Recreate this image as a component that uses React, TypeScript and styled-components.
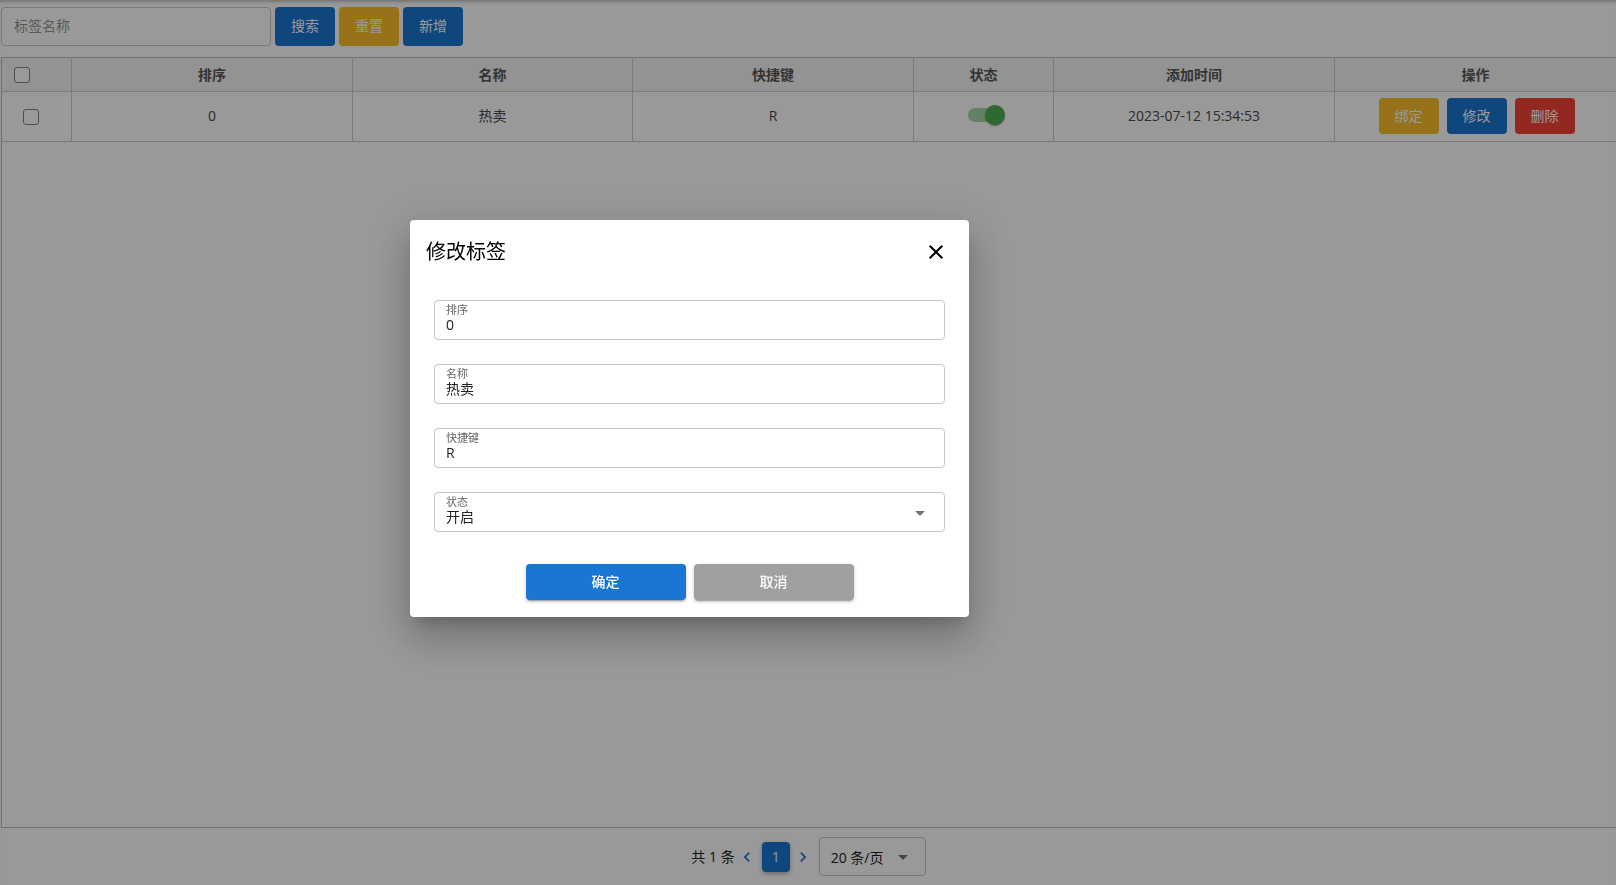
import styled, { createGlobalStyle } from 'styled-components';

const GlobalStyle = createGlobalStyle`
    html, body {
        margin: 0;
        padding: 0;
        background: #ffffff;
        font-family: "Open Sans", "Noto Sans CJK SC", sans-serif;
        font-size: 14px;
        color: #222;
    }
`;

const tones: Record<string, string> = {
    blue: '#1976d2',
    gold: '#fbc02d',
    red: '#f44336',
    gray: '#a0a0a0',
};

const columns = [
    { title: '排序', width: 281 },
    { title: '名称', width: 280 },
    { title: '快捷键', width: 281 },
    { title: '状态', width: 140 },
    { title: '添加时间', width: 281 },
    { title: '操作' },
];

const fields = [
    { label: '排序', value: '0' },
    { label: '名称', value: '热卖' },
    { label: '快捷键', value: 'R' },
    { label: '状态', value: '开启', select: true },
];

function CloseIcon() {
    return (
        <svg width="24" height="24" viewBox="0 0 24 24">
            <path fill="#000" d="M19 6.41 17.59 5 12 10.59 6.41 5 5 6.41 10.59 12 5 17.59 6.41 19 12 13.41 17.59 19 19 17.59 13.41 12z" />
        </svg>
    );
}

function DropIcon() {
    return (
        <svg width="24" height="24" viewBox="0 0 24 24">
            <path fill="#757575" d="M7 10l5 5 5-5z" />
        </svg>
    );
}

function Chevron({ dir }: { dir: 'left' | 'right' }) {
    return (
        <svg width="20" height="20" viewBox="0 0 24 24">
            {dir === 'left'
                ? <path fill="#1976d2" d="M15.41 7.41 14 6l-6 6 6 6 1.41-1.41L10.83 12z" />
                : <path fill="#1976d2" d="M10 6 8.59 7.41 13.17 12l-4.58 4.59L10 18l6-6z" />}
        </svg>
    );
}

function App() {
    return (
        <>
            <GlobalStyle />
            <Page>
                <Toolbar>
                    <SearchInput placeholder="标签名称" />
                    <ToolButton $tone="blue">搜索</ToolButton>
                    <ToolButton $tone="gold">重置</ToolButton>
                    <ToolButton $tone="blue">新增</ToolButton>
                </Toolbar>

                <TableWrap>
                    <Table>
                        <colgroup>
                            <col style={{ width: 70 }} />
                            {columns.map((c) => (
                                <col key={c.title} style={c.width ? { width: c.width } : undefined} />
                            ))}
                        </colgroup>
                        <thead>
                            <tr>
                                <HeadCell $left><Checkbox /></HeadCell>
                                {columns.map((c) => (
                                    <HeadCell key={c.title}>{c.title}</HeadCell>
                                ))}
                            </tr>
                        </thead>
                        <tbody>
                            <tr>
                                <BodyCell $left><Checkbox /></BodyCell>
                                <BodyCell>0</BodyCell>
                                <BodyCell>热卖</BodyCell>
                                <BodyCell>R</BodyCell>
                                <BodyCell>
                                    <SwitchRoot>
                                        <SwitchTrack />
                                        <SwitchThumb />
                                    </SwitchRoot>
                                </BodyCell>
                                <BodyCell>2023-07-12 15:34:53</BodyCell>
                                <BodyCell>
                                    <RowActions>
                                        <ActionButton $tone="gold">绑定</ActionButton>
                                        <ActionButton $tone="blue">修改</ActionButton>
                                        <ActionButton $tone="red">删除</ActionButton>
                                    </RowActions>
                                </BodyCell>
                            </tr>
                        </tbody>
                    </Table>
                </TableWrap>

                <Footer>
                    <Total>共 1 条</Total>
                    <PageArrow $gap={5}><Chevron dir="left" /></PageArrow>
                    <PageNumber>1</PageNumber>
                    <PageArrow $gap={6}><Chevron dir="right" /></PageArrow>
                    <PageSize>
                        <span>20 条/页</span>
                        <DropIcon />
                    </PageSize>
                </Footer>
            </Page>

            <Overlay>
                <Dialog>
                    <DialogHeader>
                        <DialogTitle>修改标签</DialogTitle>
                        <CloseButton><CloseIcon /></CloseButton>
                    </DialogHeader>
                    <DialogBody>
                        {fields.map((f) => (
                            <Field key={f.label}>
                                <FieldText>
                                    <FieldLabel>{f.label}</FieldLabel>
                                    <FieldValue>{f.value}</FieldValue>
                                </FieldText>
                                {f.select && <DropIcon />}
                            </Field>
                        ))}
                    </DialogBody>
                    <DialogActions>
                        <DialogButton $tone="blue">确定</DialogButton>
                        <DialogButton $tone="gray">取消</DialogButton>
                    </DialogActions>
                </Dialog>
            </Overlay>
        </>
    );
}

const Page = styled.div`
    height: 100vh;
    box-sizing: border-box;
    padding: 7px 0 0 1px;
    display: flex;
    flex-direction: column;
    box-shadow: inset 0 4px 4px -3px rgba(0, 0, 0, 0.35);
`;

const Toolbar = styled.div`
    display: flex;
    gap: 4px;
    height: 39px;
    margin-bottom: 11px;
`;

const SearchInput = styled.input`
    width: 270px;
    box-sizing: border-box;
    border: 1px solid #c8c8c8;
    border-radius: 4px;
    padding: 0 12px 2px;
    font-family: inherit;
    font-size: 14px;
    color: #222;
    outline: none;

    &::placeholder {
        color: #959595;
    }
`;

const ActionButton = styled.button<{ $tone: string }>`
    width: 60px;
    height: 36px;
    border: none;
    border-radius: 4px;
    background: ${(p) => tones[p.$tone]};
    color: #ffffff;
    font-family: inherit;
    font-size: 14px;
    padding: 0 0 3px;
`;

const ToolButton = styled(ActionButton)`
    height: 39px;
`;

const TableWrap = styled.div`
    flex: 1;
    border: 1px solid #bbbbbb;
    border-right: none;
    overflow: hidden;
`;

const Table = styled.table`
    width: 100%;
    table-layout: fixed;
    border-collapse: separate;
    border-spacing: 0;
`;

const HeadCell = styled.th<{ $left?: boolean }>`
    box-sizing: border-box;
    height: 34px;
    padding: 0 0 0 ${(p) => (p.$left ? '12px' : '0')};
    text-align: ${(p) => (p.$left ? 'left' : 'center')};
    background: #f5f5f5;
    border-right: 1px solid #cccccc;
    border-bottom: 1px solid #cccccc;
    font-size: 14px;
    font-weight: 700;
    line-height: 16px;
    color: #555;
    vertical-align: middle;

    &:last-child {
        border-right: none;
    }
`;

const BodyCell = styled.td<{ $left?: boolean }>`
    box-sizing: border-box;
    height: 50px;
    padding: 0 0 1px ${(p) => (p.$left ? '21px' : '0')};
    text-align: ${(p) => (p.$left ? 'left' : 'center')};
    border-right: 1px solid #cccccc;
    border-bottom: 1px solid #cccccc;
    font-size: 14px;
    line-height: 18px;
    color: #4a4a4a;
    vertical-align: middle;

    &:last-child {
        border-right: none;
    }
`;

const Checkbox = styled.span`
    display: inline-block;
    vertical-align: middle;
    width: 16px;
    height: 16px;
    box-sizing: border-box;
    border: 1.5px solid #7c848e;
    border-radius: 3px;
    background: #ffffff;
`;

const SwitchRoot = styled.span`
    display: inline-flex;
    align-items: center;
    vertical-align: middle;
    width: 37px;
    height: 20px;
    margin: 0 0 2px 6px;
`;

const SwitchTrack = styled.span`
    width: 34px;
    height: 14px;
    border-radius: 7px;
    background: #a5d7a7;
`;

const SwitchThumb = styled.span`
    width: 20px;
    height: 20px;
    margin-left: -17px;
    border-radius: 50%;
    background: #4caf50;
    box-shadow: 0 2px 1px -1px rgba(0, 0, 0, 0.2), 0 1px 1px 0 rgba(0, 0, 0, 0.14), 0 1px 3px 0 rgba(0, 0, 0, 0.12);
`;

const RowActions = styled.div`
    display: flex;
    justify-content: center;
    gap: 8px;
    padding-left: 2px;
`;

const Footer = styled.div`
    height: 57px;
    display: flex;
    align-items: center;
    justify-content: center;
    font-size: 14px;
    color: #222;
`;

const Total = styled.span`
    margin-right: 2px;
    line-height: 18px;
`;

const PageArrow = styled.span<{ $gap: number }>`
    display: flex;
    width: 20px;
    justify-content: center;
    margin-right: ${(p) => p.$gap}px;

    & svg {
        flex-shrink: 0;
    }
`;

const PageNumber = styled.span`
    width: 28px;
    height: 30px;
    margin-right: 3px;
    display: flex;
    align-items: center;
    justify-content: center;
    border-radius: 4px;
    background: #1976d2;
    color: #ffffff;
    box-shadow: 0 2px 4px rgba(0, 0, 0, 0.3);
`;

const PageSize = styled.div`
    width: 107px;
    height: 39px;
    box-sizing: border-box;
    border: 1px solid #c8c8c8;
    border-radius: 4px;
    padding: 0 10px 0 11px;
    display: flex;
    align-items: center;
    justify-content: space-between;
`;

const Overlay = styled.div`
    position: fixed;
    inset: 0;
    background: rgba(0, 0, 0, 0.4);
    box-sizing: border-box;
    padding: 220px 0 0 410px;
    display: flex;
    align-items: flex-start;
`;

const Dialog = styled.div`
    width: 559px;
    background: #ffffff;
    border-radius: 4px;
    box-shadow: 0 11px 15px -7px rgba(0, 0, 0, 0.2), 0 24px 38px 3px rgba(0, 0, 0, 0.14), 0 9px 46px 8px rgba(0, 0, 0, 0.12);
`;

const DialogHeader = styled.div`
    display: flex;
    align-items: center;
    justify-content: space-between;
    padding: 16px 21px 16px 16px;
`;

const DialogTitle = styled.h2`
    margin: 0;
    font-size: 20px;
    font-weight: 400;
    line-height: 32px;
    color: #000;
`;

const CloseButton = styled.button`
    width: 24px;
    height: 24px;
    padding: 0;
    border: none;
    background: none;
    display: flex;
`;

const DialogBody = styled.div`
    display: flex;
    flex-direction: column;
    gap: 24px;
    padding: 16px 24px 0;
`;

const Field = styled.div`
    height: 40px;
    box-sizing: border-box;
    border: 1px solid #c4c4c4;
    border-radius: 4px;
    padding: 2px 12px 0 11px;
    display: flex;
    align-items: center;
`;

const FieldText = styled.div`
    flex: 1;
    display: flex;
    flex-direction: column;
    align-self: flex-start;
`;

const FieldLabel = styled.span`
    font-size: 11px;
    line-height: 13px;
    color: #666;
`;

const FieldValue = styled.span`
    font-size: 14px;
    line-height: 18px;
    color: #222;
`;

const DialogActions = styled.div`
    display: flex;
    justify-content: center;
    gap: 8px;
    padding: 32px 0 17px;
`;

const DialogButton = styled.button<{ $tone: string }>`
    width: 160px;
    height: 36px;
    border: none;
    border-radius: 4px;
    background: ${(p) => tones[p.$tone]};
    color: #ffffff;
    font-family: inherit;
    font-size: 14px;
    font-weight: 500;
    padding: 0 0 2px;
    box-shadow: 0 3px 1px -2px rgba(0, 0, 0, 0.2), 0 2px 2px 0 rgba(0, 0, 0, 0.14), 0 1px 5px 0 rgba(0, 0, 0, 0.12);
`;

export default App;
